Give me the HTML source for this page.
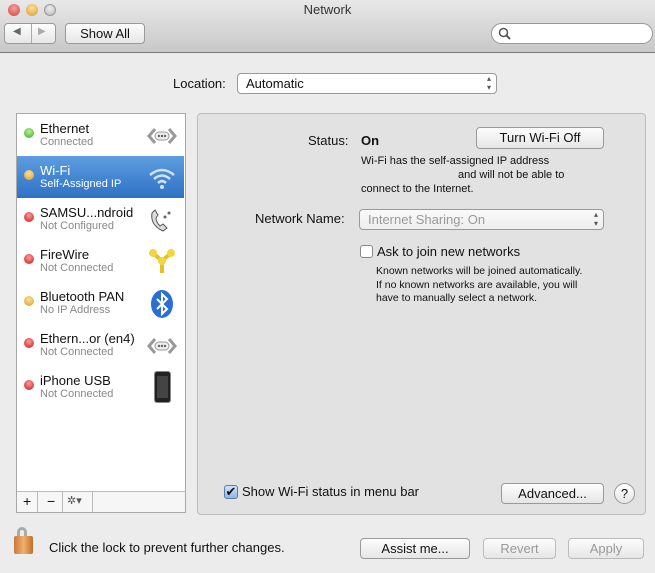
<!DOCTYPE html>
<html><head><meta charset="utf-8"><style>
*{margin:0;padding:0;box-sizing:border-box}
body{width:655px;height:573px;background:#ececec;font-family:"Liberation Sans",sans-serif;font-size:13px;color:#111;position:relative;overflow:hidden}
.abs{position:absolute}
.tb{left:0;top:0;width:655px;height:53px;background:linear-gradient(#e8e8e8,#c8c8c8);border-bottom:1px solid #7a7a7a}
.btn{position:absolute;background:linear-gradient(#fdfdfd,#e6e6e6);border:1px solid #9a9a9a;border-radius:4px;text-align:center;font-size:13px}
.dot{position:absolute;width:10px;height:10px;border-radius:50%}
.row{position:absolute;left:17px;width:167px;height:42px}
.row .n{position:absolute;left:23px;top:7px;font-size:13px}
.row .s{position:absolute;left:23px;top:22px;font-size:11px;color:#888}
.row .dot{left:7px;top:14px}
.ic{position:absolute;left:130px;top:7px;width:30px;height:30px}
.sm{font-size:11px;line-height:14px}
</style></head><body>
<div class="abs tb"></div>
<div class="dot" style="left:8px;top:4px;width:12px;height:12px;background:radial-gradient(circle at 50% 35%,#f7a0a0,#d4403e)"></div>
<div class="dot" style="left:26px;top:4px;width:12px;height:12px;background:radial-gradient(circle at 50% 35%,#fde0a0,#d99a2a)"></div>
<div class="dot" style="left:44px;top:4px;width:12px;height:12px;background:radial-gradient(circle at 50% 35%,#eee,#b8b8b8);border:1px solid #999"></div>
<div class="abs" style="left:0;top:2px;width:655px;text-align:center;font-size:13px;color:#333">Network</div>
<div class="btn" style="left:4px;top:23px;width:52px;height:21px;"><span style="position:absolute;left:8px;top:2px;color:#666;font-size:10px">◀</span><span style="position:absolute;left:26px;top:0;height:19px;border-left:1px solid #aaa"></span><span style="position:absolute;left:33px;top:2px;color:#aaa;font-size:10px">▶</span></div>
<div class="btn" style="left:65px;top:23px;width:80px;height:21px;line-height:19px">Show All</div>
<div class="abs" style="left:491px;top:23px;width:162px;height:21px;background:#fff;border:1px solid #999;border-radius:11px"><svg width="14" height="14" style="position:absolute;left:6px;top:3px"><circle cx="5.5" cy="5.5" r="4" fill="none" stroke="#555" stroke-width="1.5"/><line x1="8.5" y1="8.5" x2="12" y2="12" stroke="#555" stroke-width="2"/></svg></div>

<div class="abs" style="left:173px;top:76px">Location:</div>
<div class="btn" style="left:237px;top:73px;width:260px;height:21px;text-align:left;padding-left:8px;line-height:19px;background:#fff">Automatic<span style="position:absolute;right:5px;top:0;font-size:8px;line-height:9px;color:#555">▴<br>▾</span></div>

<div class="abs" style="left:16px;top:113px;width:170px;height:400px;background:#fff;border:1px solid #a8a8a8"></div>
<div class="row" style="top:114px"><div class="dot" style="background:radial-gradient(circle at 50% 35%,#b6f39b,#3ca622)"></div><div class="n">Ethernet</div><div class="s">Connected</div><svg class="ic" viewBox="0 0 30 30"><path d="M8 8L2 15L8 22M22 8L28 15L22 22" fill="none" stroke="#999" stroke-width="3"/><rect x="8" y="11" width="14" height="8" rx="4" fill="#eee" stroke="#999"/><circle cx="12" cy="15" r="1.2" fill="#666"/><circle cx="15" cy="15" r="1.2" fill="#666"/><circle cx="18" cy="15" r="1.2" fill="#666"/></svg></div>
<div class="row" style="top:156px;background:linear-gradient(#5d9de0,#2f71c5);color:#fff"><div class="dot" style="background:radial-gradient(circle at 50% 35%,#fde0a0,#e09a20)"></div><div class="n" style="color:#fff">Wi-Fi</div><div class="s" style="color:#fff">Self-Assigned IP</div><svg class="ic" viewBox="0 0 30 30"><path d="M3 12Q15 2 27 12M7 16Q15 9 23 16M11 20Q15 16 19 20" fill="none" stroke="#cfe3ff" stroke-width="2.5"/><circle cx="15" cy="24" r="2" fill="#cfe3ff"/></svg></div>
<div class="row" style="top:198px"><div class="dot" style="background:radial-gradient(circle at 50% 35%,#f99,#c41a1a)"></div><div class="n">SAMSU...ndroid</div><div class="s">Not Configured</div><svg class="ic" viewBox="0 0 30 30"><path d="M5 8Q3 20 16 26L20 23L16 19L13 21Q9 17 9 13L11 10L8 5Z" fill="#ddd" stroke="#555"/><circle cx="18" cy="12" r="1.5" fill="#666"/><circle cx="22" cy="8" r="1.5" fill="#666"/></svg></div>
<div class="row" style="top:240px"><div class="dot" style="background:radial-gradient(circle at 50% 35%,#f99,#c41a1a)"></div><div class="n">FireWire</div><div class="s">Not Connected</div><svg class="ic" viewBox="0 0 30 30"><path d="M6 6L15 14L24 6M15 14V26" stroke="#e3c02a" stroke-width="4" fill="none"/><circle cx="6" cy="6" r="4" fill="#f2d640"/><circle cx="24" cy="6" r="4" fill="#f2d640"/><circle cx="15" cy="14" r="4" fill="#f2d640"/></svg></div>
<div class="row" style="top:282px"><div class="dot" style="background:radial-gradient(circle at 50% 35%,#fde0a0,#e09a20)"></div><div class="n">Bluetooth PAN</div><div class="s">No IP Address</div><svg class="ic" viewBox="0 0 30 30"><ellipse cx="15" cy="15" rx="11" ry="14" fill="#2a6fd6"/><path d="M10 10L20 20L15 25V5L20 10L10 20" fill="none" stroke="#fff" stroke-width="2"/></svg></div>
<div class="row" style="top:324px"><div class="dot" style="background:radial-gradient(circle at 50% 35%,#f99,#c41a1a)"></div><div class="n">Ethern...or (en4)</div><div class="s">Not Connected</div><svg class="ic" viewBox="0 0 30 30"><path d="M8 8L2 15L8 22M22 8L28 15L22 22" fill="none" stroke="#999" stroke-width="3"/><rect x="8" y="11" width="14" height="8" rx="4" fill="#eee" stroke="#999"/><circle cx="12" cy="15" r="1.2" fill="#666"/><circle cx="15" cy="15" r="1.2" fill="#666"/><circle cx="18" cy="15" r="1.2" fill="#666"/></svg></div>
<div class="row" style="top:366px"><div class="dot" style="background:radial-gradient(circle at 50% 35%,#f99,#c41a1a)"></div><div class="n">iPhone USB</div><div class="s">Not Connected</div><div style="position:absolute;left:137px;top:5px;width:17px;height:32px;background:#222;border:1px solid #888;border-radius:3px"><div style="margin:4px 2px;height:22px;background:#444"></div></div></div>
<div class="abs" style="left:17px;top:491px;width:168px;height:21px;border-top:1px solid #bbb;background:#f6f6f6;font-size:14px">
<span style="position:absolute;left:6px;top:1px">+</span><span style="position:absolute;left:20px;top:0;height:20px;border-left:1px solid #bbb"></span>
<span style="position:absolute;left:30px;top:1px">−</span><span style="position:absolute;left:45px;top:0;height:20px;border-left:1px solid #bbb"></span>
<span style="position:absolute;left:50px;top:2px;font-size:11px;color:#555">✲▾</span><span style="position:absolute;left:75px;top:0;height:20px;border-left:1px solid #bbb"></span></div>

<div class="abs" style="left:197px;top:113px;width:449px;height:402px;background:#e2e2e2;border:1px solid #bdbdbd;border-radius:4px"></div>
<div class="abs" style="left:308px;top:133px">Status:</div>
<div class="abs" style="left:361px;top:133px;font-weight:bold">On</div>
<div class="btn" style="left:476px;top:127px;width:128px;height:22px;line-height:20px">Turn Wi-Fi Off</div>
<div class="abs sm" style="left:361px;top:154px;width:230px">Wi-Fi has the self-assigned IP address<br><span style="padding-left:97px">and will not be able to</span><br>connect to the Internet.</div>
<div class="abs" style="left:255px;top:211px">Network Name:</div>
<div class="btn" style="left:359px;top:209px;width:245px;height:21px;text-align:left;padding-left:8px;line-height:19px;color:#999;background:linear-gradient(#fafafa,#eee)">Internet Sharing: On<span style="position:absolute;right:5px;top:0;font-size:8px;line-height:9px;color:#555">▴<br>▾</span></div>
<div class="abs" style="left:360px;top:245px;width:13px;height:13px;background:#fff;border:1px solid #888;border-radius:3px"></div>
<div class="abs" style="left:377px;top:244px">Ask to join new networks</div>
<div class="abs sm" style="left:376px;top:265px;font-size:10.5px;line-height:13.5px">Known networks will be joined automatically.<br>If no known networks are available, you will<br>have to manually select a network.</div>
<div class="abs" style="left:224px;top:485px;width:14px;height:14px;background:linear-gradient(#cfe3fa,#8fb6e3);border:1px solid #5a7ea8;border-radius:3px;font-size:13px;line-height:12px;text-align:center">✔</div>
<div class="abs" style="left:242px;top:484px">Show Wi-Fi status in menu bar</div>
<div class="btn" style="left:501px;top:483px;width:103px;height:21px;line-height:19px">Advanced...</div>
<div class="abs" style="left:614px;top:483px;width:21px;height:21px;border:1px solid #999;border-radius:50%;background:linear-gradient(#fff,#e6e6e6);text-align:center;line-height:19px;font-size:13px">?</div>

<div class="abs" style="left:17px;top:527px;width:10px;height:12px;border:3px solid #aaa;border-bottom:none;border-radius:5px 5px 0 0"></div>
<div class="abs" style="left:14px;top:536px;width:19px;height:18px;background:linear-gradient(90deg,#c8783a,#f0b070,#c0702a);border-radius:2px"></div>
<div class="abs" style="left:49px;top:540px">Click the lock to prevent further changes.</div>
<div class="btn" style="left:360px;top:538px;width:110px;height:21px;line-height:19px">Assist me...</div>
<div class="btn" style="left:483px;top:538px;width:73px;height:21px;line-height:19px;color:#999;border-color:#bbb">Revert</div>
<div class="btn" style="left:568px;top:538px;width:76px;height:21px;line-height:19px;color:#999;border-color:#bbb">Apply</div>
</body></html>
